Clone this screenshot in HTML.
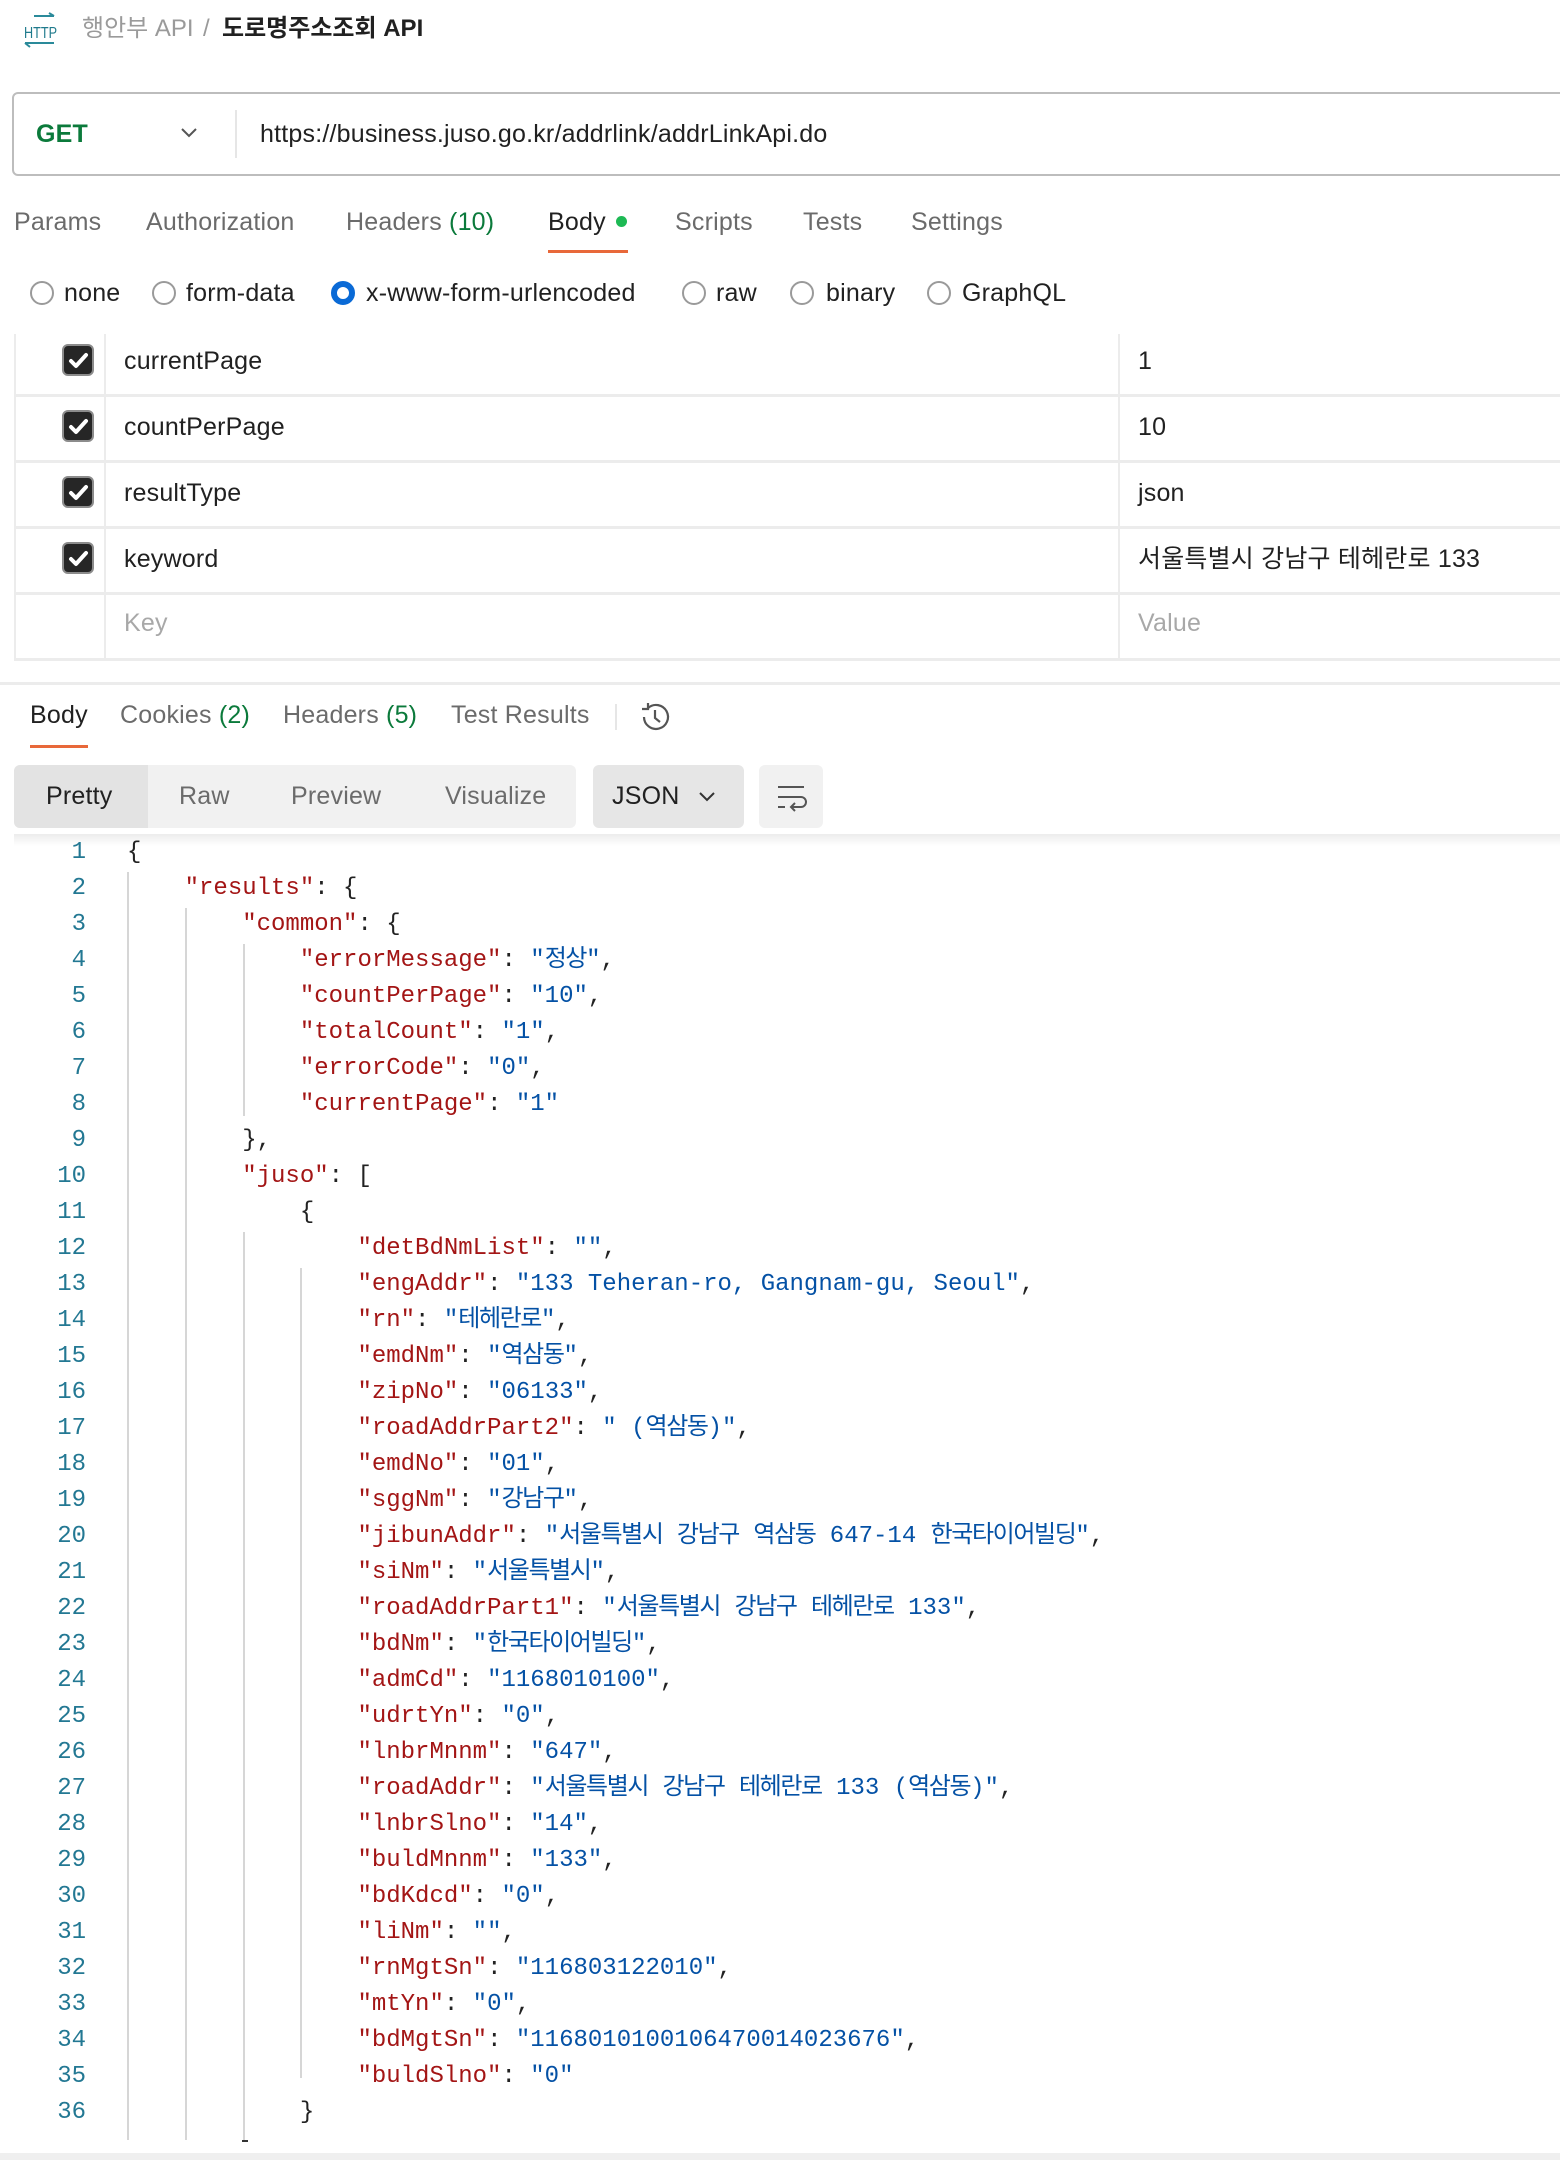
<!DOCTYPE html>
<html><head><meta charset="utf-8">
<style>
*{margin:0;padding:0;box-sizing:border-box}
body{width:1560px;height:2160px;background:#fff;position:relative;overflow:hidden;font-family:"Liberation Sans","Noto Sans CJK KR",sans-serif;color:#212121}
.a{position:absolute;white-space:nowrap}
.ui{font-size:25px;line-height:30px;letter-spacing:0.2px}
.bc{font-size:24px;line-height:30px}
.g{color:#6b6b6b}
.gr{color:#0b7a3b}
.radio{position:absolute;width:24px;height:24px;border:2px solid #9a9a9a;border-radius:50%;top:281px}
.cb{position:absolute;left:62px;width:32px;height:32px;border-radius:6px;background:#262626;border:2px solid #8c8c8c}
.hl{position:absolute;left:14px;right:0;height:3px;background:#ececec}
pre{position:absolute;font-family:"Liberation Mono","Noto Sans CJK KR",monospace;font-size:24px;line-height:36px;color:#222}
.k{color:#a31515}.s{color:#0451a5}
.h{letter-spacing:-1.4px}
.guide{position:absolute;width:2px;background:#d6d6d6}
</style></head><body>
<!-- breadcrumb -->
<svg class="a" style="left:22px;top:12px" width="38" height="36" viewBox="0 0 38 36"><path d="M12 4 L32 4 M27 1 L32 4" stroke="#2a8a9a" stroke-width="2" fill="none"/><text x="2" y="26" font-family="Liberation Sans,sans-serif" font-size="16" fill="#1f7a8c" textLength="33" lengthAdjust="spacingAndGlyphs">HTTP</text><path d="M3 31 L32 31 M3 31 L8 35" stroke="#2a8a9a" stroke-width="2" fill="none"/></svg>
<div class="a bc" style="left:82px;top:14px;color:#9a9a9a">행안부 API</div>
<div class="a bc" style="left:203px;top:14px;color:#9a9a9a">/</div>
<div class="a bc" style="left:222px;top:14px;color:#212121;font-weight:bold">도로명주소조회 API</div>
<!-- url box -->
<div class="a" style="left:12px;top:92px;width:1560px;height:84px;border:2px solid #bdbdbd;border-radius:6px"></div>
<div class="a ui" style="left:36px;top:119px;color:#0b7a3b;font-weight:bold">GET</div>
<svg class="a" style="left:180px;top:126px" width="18" height="14"><path d="M2 3 L9 10 L16 3" stroke="#555" stroke-width="2" fill="none"/></svg>
<div class="a" style="left:235px;top:110px;width:2px;height:48px;background:#e6e6e6"></div>
<div class="a ui" style="left:260px;top:119px">https://business.juso.go.kr/addrlink/addrLinkApi.do</div>
<!-- tabs -->
<div class="a ui g" style="left:14px;top:207px">Params</div>
<div class="a ui g" style="left:146px;top:207px">Authorization</div>
<div class="a ui g" style="left:346px;top:207px">Headers <span class="gr">(10)</span></div>
<div class="a ui" style="left:548px;top:207px">Body</div>
<div class="a" style="left:616px;top:216px;width:11px;height:11px;border-radius:50%;background:#1db954"></div>
<div class="a" style="left:548px;top:250px;width:80px;height:3px;background:#e8683a"></div>
<div class="a ui g" style="left:675px;top:207px">Scripts</div>
<div class="a ui g" style="left:803px;top:207px">Tests</div>
<div class="a ui g" style="left:911px;top:207px">Settings</div>
<!-- radios -->
<div class="radio" style="left:30px"></div><div class="a ui" style="left:64px;top:278px">none</div>
<div class="radio" style="left:152px"></div><div class="a ui" style="left:186px;top:278px">form-data</div>
<div class="radio" style="left:331px;border:6px solid #0a6ad6"></div><div class="a ui" style="left:366px;top:278px">x-www-form-urlencoded</div>
<div class="radio" style="left:682px"></div><div class="a ui" style="left:716px;top:278px">raw</div>
<div class="radio" style="left:790px"></div><div class="a ui" style="left:826px;top:278px">binary</div>
<div class="radio" style="left:927px"></div><div class="a ui" style="left:962px;top:278px">GraphQL</div>
<!-- table -->
<div class="a" style="left:14px;top:334px;width:2px;height:327px;background:#ececec"></div>
<div class="a" style="left:104px;top:334px;width:2px;height:327px;background:#ececec"></div>
<div class="a" style="left:1118px;top:334px;width:2px;height:327px;background:#ececec"></div>
<div class="hl" style="top:394px"></div><div class="hl" style="top:460px"></div><div class="hl" style="top:526px"></div><div class="hl" style="top:592px"></div><div class="hl" style="top:658px"></div>
<div class="cb" style="top:344px"></div><div class="cb" style="top:410px"></div><div class="cb" style="top:476px"></div><div class="cb" style="top:542px"></div>
<svg class="a" style="left:62px;top:344px" width="32" height="264"><g stroke="#fff" stroke-width="4" fill="none" stroke-linecap="round" stroke-linejoin="round"><path d="M9 17 L14 22 L24 11"/><path d="M9 83 L14 88 L24 77"/><path d="M9 149 L14 154 L24 143"/><path d="M9 215 L14 220 L24 209"/></g></svg>
<div class="a ui" style="left:124px;top:346px">currentPage</div><div class="a ui" style="left:1138px;top:346px">1</div>
<div class="a ui" style="left:124px;top:412px">countPerPage</div><div class="a ui" style="left:1138px;top:412px">10</div>
<div class="a ui" style="left:124px;top:478px">resultType</div><div class="a ui" style="left:1138px;top:478px">json</div>
<div class="a ui" style="left:124px;top:544px">keyword</div><div class="a ui" style="left:1138px;top:544px">서울특별시 강남구 테헤란로 133</div>
<div class="a ui" style="left:124px;top:608px;color:#a8a8a8">Key</div><div class="a ui" style="left:1138px;top:608px;color:#a8a8a8">Value</div>
<div class="a" style="left:0;top:682px;width:1560px;height:3px;background:#ececec"></div>
<!-- response tabs -->
<div class="a ui" style="left:30px;top:700px">Body</div>
<div class="a" style="left:30px;top:745px;width:58px;height:3px;background:#e8683a"></div>
<div class="a ui g" style="left:120px;top:700px">Cookies <span class="gr">(2)</span></div>
<div class="a ui g" style="left:283px;top:700px">Headers <span class="gr">(5)</span></div>
<div class="a ui g" style="left:451px;top:700px">Test Results</div>
<div class="a" style="left:615px;top:704px;width:2px;height:26px;background:#e6e6e6"></div>
<svg class="a" style="left:638px;top:700px" width="34" height="34" viewBox="0 0 34 34"><path d="M6 17 A12 12 0 1 0 10 8" stroke="#555" stroke-width="2.2" fill="none"/><path d="M10 3 L10 9 L4 9" stroke="#555" stroke-width="2.2" fill="none"/><path d="M17 10 L17 18 L22 22" stroke="#555" stroke-width="2.2" fill="none"/></svg>
<!-- toolbar -->
<div class="a" style="left:14px;top:765px;width:562px;height:63px;background:#f1f1f1;border-radius:6px"></div>
<div class="a" style="left:14px;top:765px;width:134px;height:63px;background:#e3e3e3;border-radius:6px 0 0 6px"></div>
<div class="a ui" style="left:46px;top:781px">Pretty</div>
<div class="a ui g" style="left:179px;top:781px">Raw</div>
<div class="a ui g" style="left:291px;top:781px">Preview</div>
<div class="a ui g" style="left:445px;top:781px">Visualize</div>
<div class="a" style="left:593px;top:765px;width:151px;height:63px;background:#e6e6e6;border-radius:6px"></div>
<div class="a ui" style="left:612px;top:781px">JSON</div>
<svg class="a" style="left:698px;top:790px" width="18" height="14"><path d="M2 3 L9 10 L16 3" stroke="#333" stroke-width="2" fill="none"/></svg>
<div class="a" style="left:759px;top:765px;width:64px;height:63px;background:#f1f1f1;border-radius:6px"></div>
<svg class="a" style="left:775px;top:780px" width="34" height="34" viewBox="0 0 34 34"><g stroke="#555" stroke-width="2" fill="none"><path d="M3 7 L29 7"/><path d="M3 17 L26 17 A5 5 0 0 1 26 27 L17 27"/><path d="M20 23 L16 27 L20 31"/><path d="M3 27 L10 27"/></g></svg>
<!-- code area -->
<div class="a" style="left:14px;top:834px;width:1546px;height:12px;background:linear-gradient(#ececec,#fff)"></div>
<div class="guide" style="left:127px;top:872px;height:1268px"></div>
<div class="guide" style="left:185px;top:908px;height:1232px"></div>
<div class="guide" style="left:243px;top:944px;height:172px"></div>
<div class="guide" style="left:243px;top:1232px;height:908px"></div>
<div class="guide" style="left:300px;top:1268px;height:810px"></div>
<pre style="left:40px;top:835px;width:46px;text-align:right;color:#237893">1
2
3
4
5
6
7
8
9
10
11
12
13
14
15
16
17
18
19
20
21
22
23
24
25
26
27
28
29
30
31
32
33
34
35
36</pre>
<pre style="left:127px;top:835px">{
    <span class="k">"results"</span>: {
        <span class="k">"common"</span>: {
            <span class="k">"errorMessage"</span>: <span class="s">"<span class="h">정상</span>"</span>,
            <span class="k">"countPerPage"</span>: <span class="s">"10"</span>,
            <span class="k">"totalCount"</span>: <span class="s">"1"</span>,
            <span class="k">"errorCode"</span>: <span class="s">"0"</span>,
            <span class="k">"currentPage"</span>: <span class="s">"1"</span>
        },
        <span class="k">"juso"</span>: [
            {
                <span class="k">"detBdNmList"</span>: <span class="s">""</span>,
                <span class="k">"engAddr"</span>: <span class="s">"133 Teheran-ro, Gangnam-gu, Seoul"</span>,
                <span class="k">"rn"</span>: <span class="s">"<span class="h">테헤란로</span>"</span>,
                <span class="k">"emdNm"</span>: <span class="s">"<span class="h">역삼동</span>"</span>,
                <span class="k">"zipNo"</span>: <span class="s">"06133"</span>,
                <span class="k">"roadAddrPart2"</span>: <span class="s">" (<span class="h">역삼동</span>)"</span>,
                <span class="k">"emdNo"</span>: <span class="s">"01"</span>,
                <span class="k">"sggNm"</span>: <span class="s">"<span class="h">강남구</span>"</span>,
                <span class="k">"jibunAddr"</span>: <span class="s">"<span class="h">서울특별시</span> <span class="h">강남구</span> <span class="h">역삼동</span> 647-14 <span class="h">한국타이어빌딩</span>"</span>,
                <span class="k">"siNm"</span>: <span class="s">"<span class="h">서울특별시</span>"</span>,
                <span class="k">"roadAddrPart1"</span>: <span class="s">"<span class="h">서울특별시</span> <span class="h">강남구</span> <span class="h">테헤란로</span> 133"</span>,
                <span class="k">"bdNm"</span>: <span class="s">"<span class="h">한국타이어빌딩</span>"</span>,
                <span class="k">"admCd"</span>: <span class="s">"1168010100"</span>,
                <span class="k">"udrtYn"</span>: <span class="s">"0"</span>,
                <span class="k">"lnbrMnnm"</span>: <span class="s">"647"</span>,
                <span class="k">"roadAddr"</span>: <span class="s">"<span class="h">서울특별시</span> <span class="h">강남구</span> <span class="h">테헤란로</span> 133 (<span class="h">역삼동</span>)"</span>,
                <span class="k">"lnbrSlno"</span>: <span class="s">"14"</span>,
                <span class="k">"buldMnnm"</span>: <span class="s">"133"</span>,
                <span class="k">"bdKdcd"</span>: <span class="s">"0"</span>,
                <span class="k">"liNm"</span>: <span class="s">""</span>,
                <span class="k">"rnMgtSn"</span>: <span class="s">"116803122010"</span>,
                <span class="k">"mtYn"</span>: <span class="s">"0"</span>,
                <span class="k">"bdMgtSn"</span>: <span class="s">"1168010100106470014023676"</span>,
                <span class="k">"buldSlno"</span>: <span class="s">"0"</span>
            }</pre>
<div class="a" style="left:242px;top:2140px;width:6px;height:2px;background:#333"></div>
<div class="a" style="left:0;top:2153px;width:1560px;height:7px;background:#efefef"></div>
</body></html>
